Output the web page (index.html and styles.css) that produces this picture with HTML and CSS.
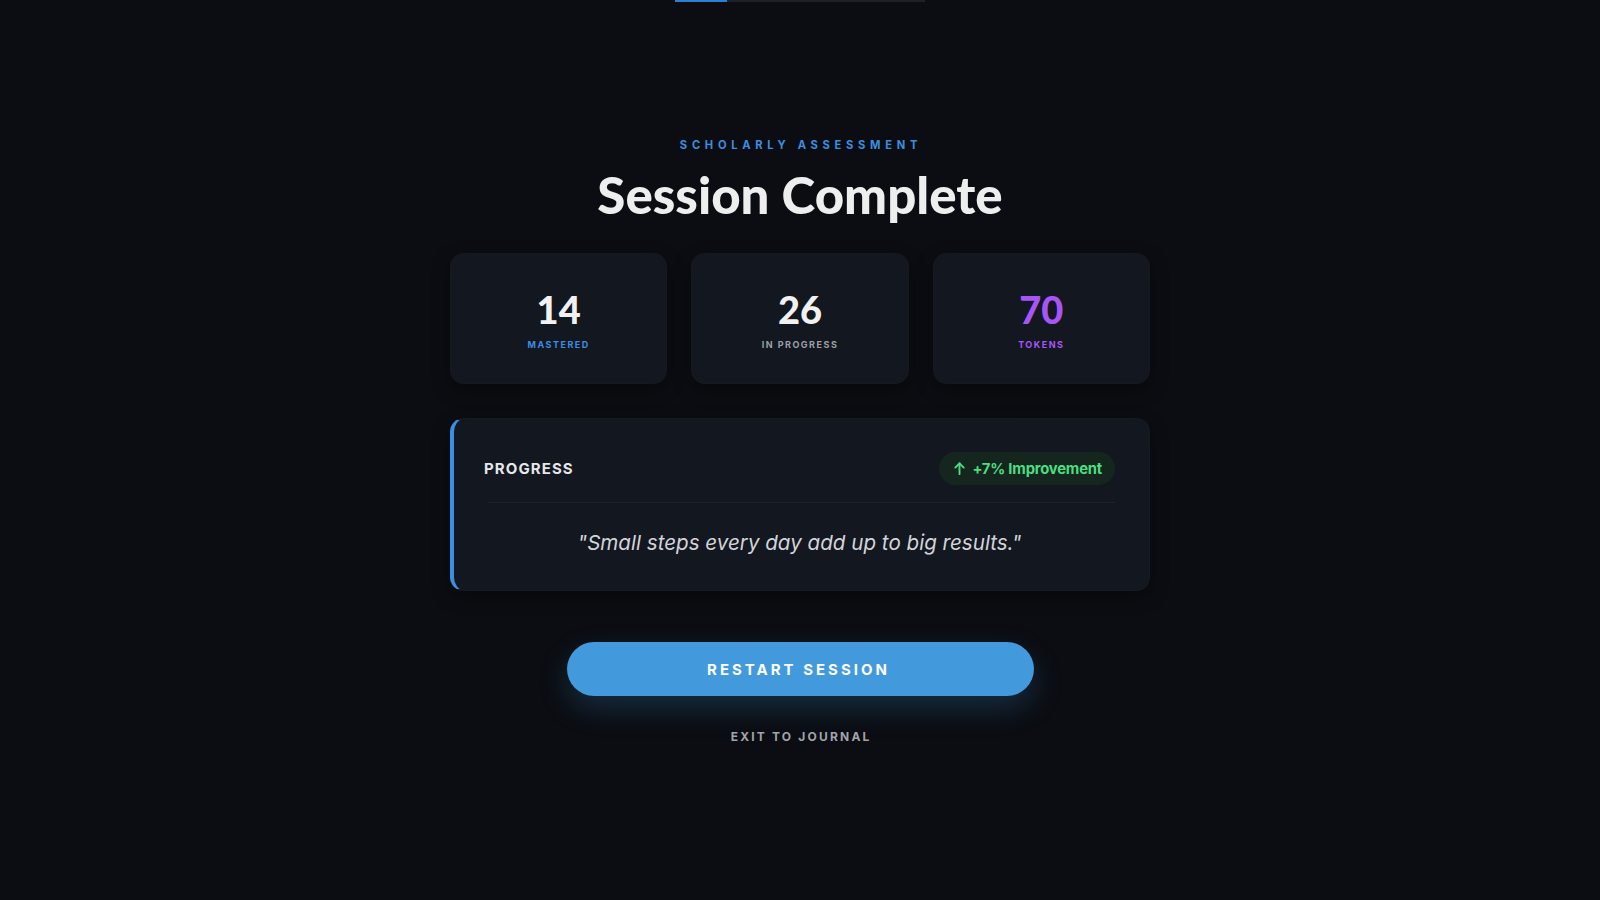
FILE: index.html
```html
<!DOCTYPE html>
<html lang="en">
<head>
<meta charset="utf-8">
<title>Session Complete</title>
<link rel="stylesheet" href="styles.css">
</head>
<body>
<div class="topbar"><div class="topbar-fill"></div></div>
<main class="page">
  <p class="eyebrow">SCHOLARLY ASSESSMENT</p>
  <h1 class="title">Session Complete</h1>
  <section class="stats">
    <div class="stat">
      <span class="stat-num">14</span>
      <span class="stat-label label-blue">MASTERED</span>
    </div>
    <div class="stat">
      <span class="stat-num">26</span>
      <span class="stat-label label-gray">IN PROGRESS</span>
    </div>
    <div class="stat">
      <span class="stat-num num-purple">70</span>
      <span class="stat-label label-purple">TOKENS</span>
    </div>
  </section>
  <section class="progress-card">
    <div class="progress-head">
      <span class="progress-title">PROGRESS</span>
      <span class="badge">
        <svg class="badge-icon" viewBox="0 0 16 16" width="15" height="15" fill="none" stroke="currentColor" stroke-width="2" stroke-linecap="round" stroke-linejoin="round"><path d="M8 14V2.5"/><path d="M3.5 7 8 2.5 12.5 7"/></svg>
        +7% Improvement
      </span>
    </div>
    <div class="divider"></div>
    <p class="quote">"Small steps every day add up to big results."</p>
  </section>
  <button class="restart">RESTART SESSION</button>
  <a class="exit" href="#">EXIT TO JOURNAL</a>
</main>
</body>
</html>
```
FILE: styles.css
```css
* { box-sizing: border-box; }
html, body { margin: 0; padding: 0; }
body {
  background: #0b0d12;
  font-family: "Inter", "Liberation Sans", sans-serif;
  color: #e5e7eb;
  height: 900px;
  overflow: hidden;
}
.topbar {
  width: 250px;
  height: 2px;
  margin: 0 auto;
  background: #1c2029;
}
.topbar-fill {
  width: 52px;
  height: 100%;
  background: #2b7fd4;
}
.page {
  display: flex;
  flex-direction: column;
  align-items: center;
  padding-top: 136px;
}
.eyebrow {
  margin: 0;
  font-family: "Inter", sans-serif;
  font-size: 11.2px;
  line-height: 14px;
  font-weight: 700;
  letter-spacing: 4.7px;
  color: #3b8ee0;
  padding-left: 2px;
}
.title {
  margin: 12px 0 0;
  font-family: "Lato", sans-serif;
  font-weight: 900;
  font-size: 51px;
  line-height: 61px;
  color: #eeeeef;
  letter-spacing: 0;
}
.stats {
  margin-top: 28px;
  width: 700px;
  display: grid;
  grid-template-columns: repeat(3, 1fr);
  gap: 24px;
}
.stat {
  height: 131px;
  border-radius: 14px;
  background: #131720;
  border: 1px solid rgba(255,255,255,0.012);
  box-shadow: 0 6px 18px rgba(0,0,0,0.35);
  display: flex;
  flex-direction: column;
  align-items: center;
  justify-content: center;
  gap: 8px;
}
.stat-num {
  font-family: "Lato", sans-serif;
  font-weight: 900;
  font-size: 38px;
  line-height: 44px;
  color: #f1f1f2;
}
.num-purple { color: #a855f7; }
.stat-label {
  font-family: "Inter", sans-serif;
  font-weight: 700;
  font-size: 9px;
  line-height: 12px;
  letter-spacing: 1.5px;
}
.label-blue { color: #3b8ee0; }
.label-gray { color: #9ca0a8; }
.label-purple { color: #a855f7; }
.progress-card {
  margin-top: 34px;
  width: 700px;
  border-radius: 14px;
  background: #131720;
  border: 1px solid rgba(255,255,255,0.015);
  border-left: 4px solid #3b8ee0;
  box-shadow: 0 6px 18px rgba(0,0,0,0.35);
  padding: 33px 34px 33px 30px;
}
.progress-head {
  display: flex;
  align-items: center;
  justify-content: space-between;
}
.progress-title {
  font-family: "Inter", sans-serif;
  font-weight: 700;
  font-size: 15px;
  letter-spacing: 1.1px;
  color: #e5e7eb;
}
.badge {
  display: inline-flex;
  align-items: center;
  gap: 5px;
  height: 33px;
  padding: 0 13px 0 13px;
  border-radius: 17px;
  background: #15261e;
  color: #4ade80;
  font-family: "Inter", sans-serif;
  font-weight: 700;
  font-size: 14.8px;
  letter-spacing: -0.2px;
}
.badge-icon { display: block; }
.divider {
  margin: 17px 0 0 4px;
  height: 1px;
  background: #1d222b;
}
.quote {
  margin: 26px 0 0;
  text-align: center;
  font-family: "Inter", sans-serif;
  font-style: italic;
  font-size: 20.6px;
  line-height: 28px;
  color: #d2d4d8;
}
.restart {
  margin-top: 51px;
  width: 467px;
  height: 54px;
  border: none;
  border-radius: 27px;
  background: #4299dc;
  color: #ffffff;
  font-family: "Inter", sans-serif;
  font-weight: 700;
  font-size: 15px;
  letter-spacing: 3px;
  padding-left: 3px;
  box-shadow: 0 12px 30px rgba(66,153,225,0.22);
  cursor: pointer;
}
.exit {
  margin-top: 33px;
  font-family: "Inter", sans-serif;
  font-weight: 700;
  font-size: 12px;
  line-height: 16px;
  letter-spacing: 2.2px;
  color: #a0a4ab;
  text-decoration: none;
  padding-left: 2.2px;
}
```
